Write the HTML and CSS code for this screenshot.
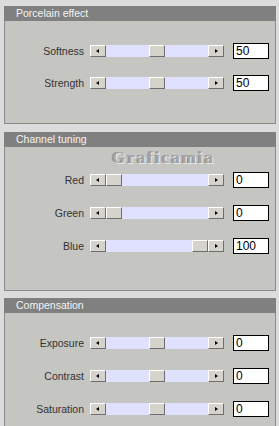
FILE: index.html
```html
<!DOCTYPE html>
<html lang="en">
<head>
    <meta charset="UTF-8">
    <title>Porcelain effect</title>
    <link rel="stylesheet" href="styles.css">
</head>
<body>
    <div class="panel panel-porcelain">
        <div class="panel-title">Porcelain effect</div>
        <div class="panel-body">
            <div class="row">
                <span class="label">Softness</span>
                <div class="scrollbar">
                    <span class="btn btn-left"></span>
                    <div class="track"><span class="thumb" style="margin-left: 43px"></span></div>
                    <span class="btn btn-right"></span>
                </div>
                <div class="value">50</div>
            </div>
            <div class="row">
                <span class="label">Strength</span>
                <div class="scrollbar">
                    <span class="btn btn-left"></span>
                    <div class="track"><span class="thumb" style="margin-left: 43px"></span></div>
                    <span class="btn btn-right"></span>
                </div>
                <div class="value">50</div>
            </div>
        </div>
    </div>

    <div class="panel panel-channel">
        <div class="panel-title">Channel tuning</div>
        <div class="watermark">Graficamia</div>
        <div class="panel-body">
            <div class="row">
                <span class="label">Red</span>
                <div class="scrollbar">
                    <span class="btn btn-left"></span>
                    <div class="track"><span class="thumb" style="margin-left: 0px"></span></div>
                    <span class="btn btn-right"></span>
                </div>
                <div class="value">0</div>
            </div>
            <div class="row">
                <span class="label">Green</span>
                <div class="scrollbar">
                    <span class="btn btn-left"></span>
                    <div class="track"><span class="thumb" style="margin-left: 0px"></span></div>
                    <span class="btn btn-right"></span>
                </div>
                <div class="value">0</div>
            </div>
            <div class="row">
                <span class="label">Blue</span>
                <div class="scrollbar">
                    <span class="btn btn-left"></span>
                    <div class="track"><span class="thumb" style="margin-left: 86px"></span></div>
                    <span class="btn btn-right"></span>
                </div>
                <div class="value">100</div>
            </div>
        </div>
    </div>

    <div class="panel panel-comp">
        <div class="panel-title">Compensation</div>
        <div class="panel-body">
            <div class="row">
                <span class="label">Exposure</span>
                <div class="scrollbar">
                    <span class="btn btn-left"></span>
                    <div class="track"><span class="thumb" style="margin-left: 43px"></span></div>
                    <span class="btn btn-right"></span>
                </div>
                <div class="value">0</div>
            </div>
            <div class="row">
                <span class="label">Contrast</span>
                <div class="scrollbar">
                    <span class="btn btn-left"></span>
                    <div class="track"><span class="thumb" style="margin-left: 43px"></span></div>
                    <span class="btn btn-right"></span>
                </div>
                <div class="value">0</div>
            </div>
            <div class="row">
                <span class="label">Saturation</span>
                <div class="scrollbar">
                    <span class="btn btn-left"></span>
                    <div class="track"><span class="thumb" style="margin-left: 43px"></span></div>
                    <span class="btn btn-right"></span>
                </div>
                <div class="value">0</div>
            </div>
        </div>
    </div>
</body>
</html>
```

FILE: styles.css
```css
body {
    margin: 0;
    padding: 6px 0 0 4px;
    background-color: #dcdcdc;
    font-family: "Liberation Sans", Arial, sans-serif;
    overflow: hidden;
}

.panel {
    position: relative;
    width: 270px;
    border: 1px solid #8a8a8a;
    border-top: none;
    background-color: #c5c5c2;
    margin-bottom: 8px;
}

.panel-porcelain {
    height: 117px;
}

.panel-channel {
    height: 158px;
    margin-bottom: 7px;
}

.panel-comp {
    height: 140px;
}

.panel-title {
    height: 15px;
    line-height: 15px;
    margin: 0 -1px;
    padding-left: 12px;
    background-color: #808080;
    color: #f4f4f4;
    font-size: 10.5px;
}

.panel-body {
    display: flex;
    flex-direction: column;
    gap: 16px;
}

.panel-porcelain .panel-body {
    padding-top: 22px;
}

.panel-channel .panel-body {
    padding-top: 25px;
    gap: 17px;
}

.panel-comp .panel-body {
    padding-top: 22px;
    gap: 17px;
}

.watermark {
    position: absolute;
    top: 16px;
    left: 107px;
    font-family: "Liberation Serif", "Times New Roman", serif;
    font-weight: bold;
    font-size: 17px;
    letter-spacing: 2px;
    line-height: 20px;
    color: #a6a6a6;
    text-shadow: 1px 1px 0 #ececec, -1px 0 0 #8e8e8e;
}

.row {
    display: flex;
    align-items: center;
    height: 16px;
}

.label {
    width: 79px;
    text-align: right;
    font-size: 10.5px;
    color: #333;
}

.scrollbar {
    display: flex;
    height: 12px;
    margin-left: 6px;
    width: 134px;
}

.btn,
.thumb {
    position: relative;
    box-sizing: border-box;
    width: 16px;
    height: 12px;
    flex: none;
    background-color: #d6d3cc;
    border-top: 1px solid #fff;
    border-left: 1px solid #fff;
    border-right: 1px solid #6e6e6e;
    border-bottom: 1px solid #6e6e6e;
}

.btn::after {
    content: "";
    position: absolute;
    top: 3px;
    width: 0;
    height: 0;
    border-top: 2px solid transparent;
    border-bottom: 2px solid transparent;
}

.btn-left::after {
    left: 5px;
    border-right: 3px solid #000;
}

.btn-right::after {
    left: 6px;
    border-left: 3px solid #000;
}

.track {
    display: flex;
    flex: 1;
    background-color: #e0e0ff;
}

.value {
    box-sizing: border-box;
    width: 36px;
    height: 16px;
    margin-left: 9px;
    border: 1px solid #000;
    background: #fff;
    font-size: 12px;
    line-height: 14px;
    padding-left: 2px;
    color: #000;
}
```
